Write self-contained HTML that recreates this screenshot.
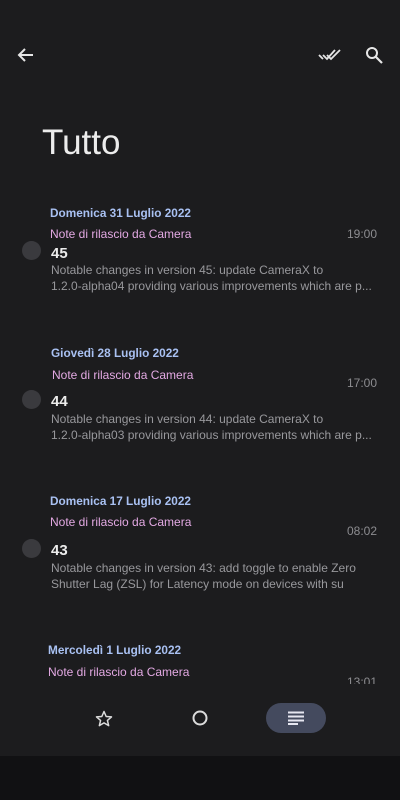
<!DOCTYPE html>
<html><head><meta charset="utf-8"><style>
*{margin:0;padding:0;box-sizing:border-box}
body{width:400px;height:800px;background:#1c1c1e;font-family:"Liberation Sans",sans-serif;position:relative;overflow:hidden}
.a{position:absolute;white-space:nowrap}
.d{color:#a9c1f2;font-size:11.8px;font-weight:bold}
.t{color:#e3a9e3;font-size:12px}
.tm{color:#8c8c90;font-size:12px}
.n{color:#ececec;font-size:15px;font-weight:bold}
.ds{color:#98989c;font-size:12px;line-height:16px}
.c{position:absolute;width:19px;height:19px;border-radius:50%;background:#3a3a3e}
#clip{position:absolute;left:0;top:0;width:400px;height:684px;overflow:hidden}
</style></head><body>
<svg class="a" style="left:16px;top:45px" width="20" height="20" viewBox="0 0 20 20"><path d="M17 10H3M9 4L3 10l6 6" stroke="#e6e6e6" stroke-width="2" fill="none"/></svg>
<svg class="a" style="left:318px;top:46px" width="24" height="18" viewBox="0 0 24 18"><path d="M1 9l4 4M5 9l4 4 8-9M9 9l4 4 9-9" stroke="#e6e6e6" stroke-width="1.8" fill="none"/></svg>
<svg class="a" style="left:364px;top:45px" width="20" height="20" viewBox="0 0 20 20"><circle cx="8" cy="8" r="5" stroke="#e6e6e6" stroke-width="2" fill="none"/><path d="M12 12l6 6" stroke="#e6e6e6" stroke-width="2.2"/></svg>
<div class="a" style="left:42px;top:123px;font-size:35px;color:#ececec">Tutto</div>
<div id="clip">
<div class="a d" style="left:50px;top:206px">Domenica 31 Luglio 2022</div>
<div class="a t" style="left:50px;top:227px">Note di rilascio da Camera</div>
<div class="a tm" style="right:23px;top:227px">19:00</div>
<div class="c" style="left:22px;top:241px"></div>
<div class="a n" style="left:51px;top:245px">45</div>
<div class="a ds" style="left:51px;top:262px">Notable changes in version 45: update CameraX to<br>1.2.0-alpha04 providing various improvements which are p...</div>

<div class="a d" style="left:51px;top:346px">Giovedì 28 Luglio 2022</div>
<div class="a t" style="left:52px;top:368px">Note di rilascio da Camera</div>
<div class="a tm" style="right:23px;top:376px">17:00</div>
<div class="c" style="left:22px;top:390px"></div>
<div class="a n" style="left:51px;top:393px">44</div>
<div class="a ds" style="left:51px;top:411px">Notable changes in version 44: update CameraX to<br>1.2.0-alpha03 providing various improvements which are p...</div>

<div class="a d" style="left:50px;top:494px">Domenica 17 Luglio 2022</div>
<div class="a t" style="left:50px;top:515px">Note di rilascio da Camera</div>
<div class="a tm" style="right:23px;top:524px">08:02</div>
<div class="c" style="left:22px;top:539px"></div>
<div class="a n" style="left:51px;top:542px">43</div>
<div class="a ds" style="left:51px;top:560px">Notable changes in version 43: add toggle to enable Zero<br>Shutter Lag (ZSL) for Latency mode on devices with su</div>

<div class="a d" style="left:48px;top:643px">Mercoledì 1 Luglio 2022</div>
<div class="a t" style="left:48px;top:665px">Note di rilascio da Camera</div>
<div class="a tm" style="right:23px;top:675px">13:01</div>
</div>
<svg class="a" style="left:94px;top:709px" width="20" height="20" viewBox="0 0 24 24"><path d="M12 3l2.6 6 6.4.5-4.9 4.2 1.5 6.3L12 16.6 6.4 20l1.5-6.3L3 9.5l6.4-.5z" stroke="#dcdcdc" stroke-width="1.8" fill="none" stroke-linejoin="round"/></svg>
<svg class="a" style="left:190px;top:708px" width="20" height="20" viewBox="0 0 20 20"><circle cx="10" cy="10" r="6.5" stroke="#dcdcdc" stroke-width="2" fill="none"/></svg>
<div class="a" style="left:266px;top:703px;width:60px;height:30px;border-radius:15px;background:#444a5e"></div>
<svg class="a" style="left:288px;top:711px" width="16" height="14" viewBox="0 0 16 14"><path d="M0 1.5h16M0 5.5h16M0 9.5h16M0 13h10" stroke="#e6e6f0" stroke-width="2"/></svg>
<div class="a" style="left:0;top:756px;width:400px;height:44px;background:#111113"></div>
</body></html>
